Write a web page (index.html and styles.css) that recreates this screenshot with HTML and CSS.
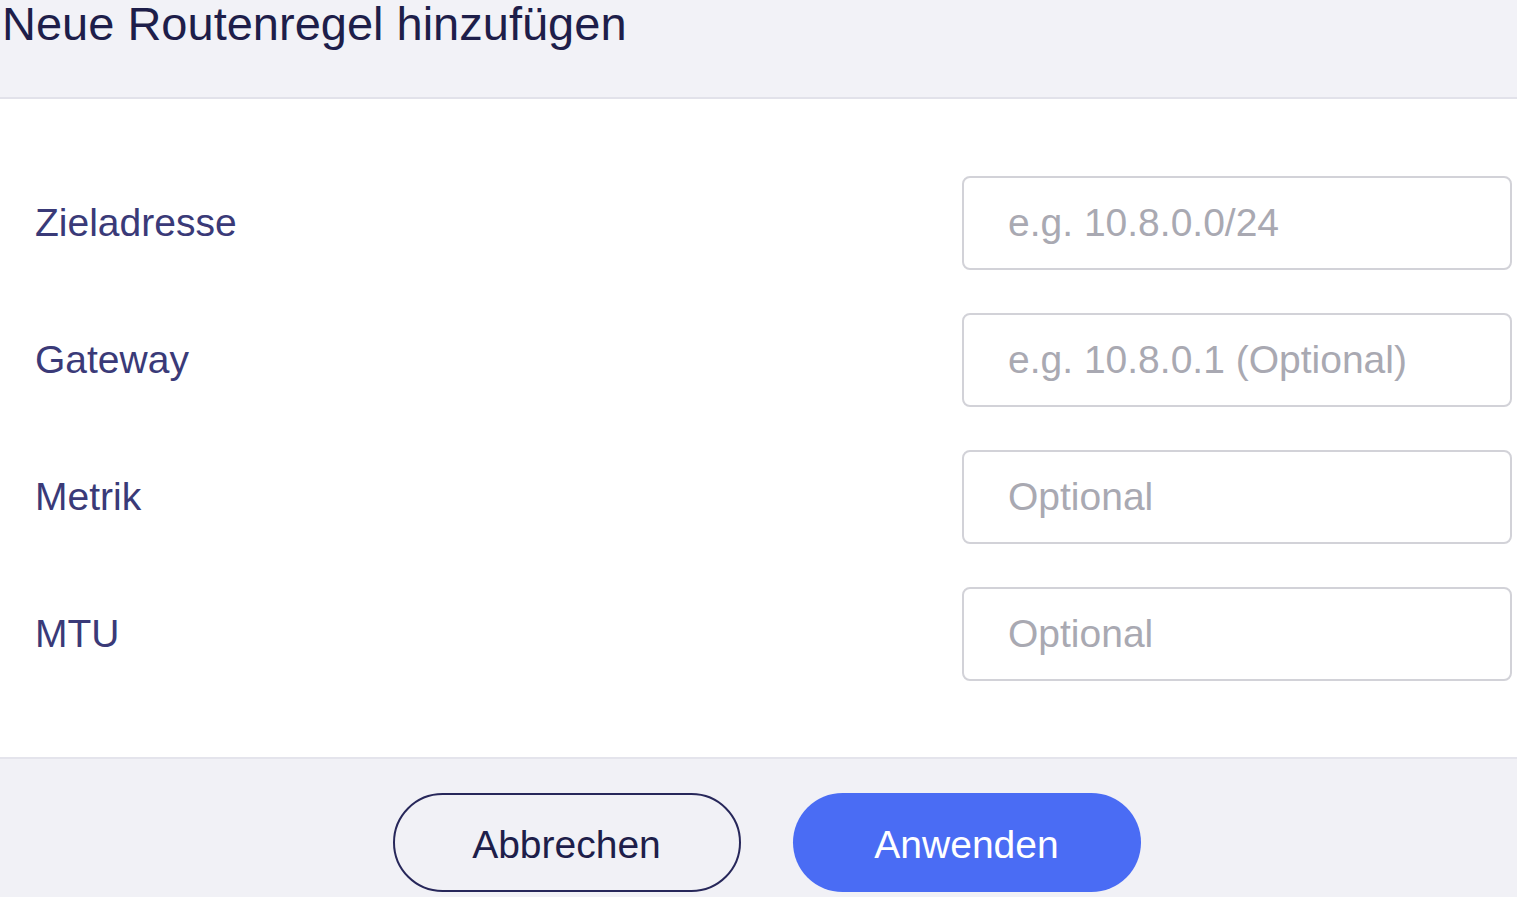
FILE: index.html
```html
<!DOCTYPE html>
<html lang="de">
<head>
<meta charset="utf-8">
<title>Neue Routenregel hinzufügen</title>
<link rel="stylesheet" href="styles.css">
</head>
<body>
<div class="dialog">
  <header class="head">
    <h1 class="title">Neue Routenregel hinzufügen</h1>
  </header>
  <main class="body">
    <div class="row">
      <label class="label" for="f1">Zieladresse</label>
      <input class="field" id="f1" type="text" placeholder="e.g. 10.8.0.0/24">
    </div>
    <div class="row">
      <label class="label" for="f2">Gateway</label>
      <input class="field" id="f2" type="text" placeholder="e.g. 10.8.0.1 (Optional)">
    </div>
    <div class="row">
      <label class="label" for="f3">Metrik</label>
      <input class="field" id="f3" type="text" placeholder="Optional">
    </div>
    <div class="row">
      <label class="label" for="f4">MTU</label>
      <input class="field" id="f4" type="text" placeholder="Optional">
    </div>
  </main>
  <footer class="foot">
    <button class="btn btn-cancel" type="button">Abbrechen</button>
    <button class="btn btn-apply" type="button">Anwenden</button>
  </footer>
</div>
</body>
</html>
```
FILE: styles.css
```css
html, body {
  margin: 0;
  padding: 0;
  height: 100%;
  overflow: hidden;
}
body {
  font-family: "Liberation Sans", Arial, sans-serif;
  background: #ffffff;
}
.dialog {
  display: flex;
  flex-direction: column;
  height: 897px;
}
.head {
  height: 97px;
  background: #f2f2f7;
  border-bottom: 2px solid #e2e2ea;
  box-sizing: content-box;
}
.title {
  margin: 0;
  padding-left: 2px;
  font-size: 47px;
  line-height: 48px;
  font-weight: 400;
  color: #1e1e4a;
}
.body {
  background: #ffffff;
  padding: 77px 5px 76px 35px;
  display: flex;
  flex-direction: column;
  gap: 43px;
}
.row {
  display: flex;
  align-items: center;
  justify-content: space-between;
}
.label {
  font-size: 39px;
  color: #3a3a78;
}
.field {
  width: 550px;
  height: 94px;
  box-sizing: border-box;
  border: 2px solid #d2d2d8;
  border-radius: 8px;
  padding: 0 0 0 44px;
  font-family: "Liberation Sans", Arial, sans-serif;
  font-size: 39px;
  color: #333;
  background: #fff;
  outline: none;
}
.field::placeholder {
  color: #a9a9b2;
}
.foot {
  flex: 1;
  background: #f1f1f6;
  border-top: 2px solid #e4e4ec;
  display: flex;
  justify-content: center;
  align-items: flex-start;
  gap: 52px;
  padding-top: 34px;
  padding-left: 16px;
}
.btn {
  width: 348px;
  height: 99px;
  border-radius: 50px;
  padding: 4px 0 0;
  font-family: "Liberation Sans", Arial, sans-serif;
  font-size: 39px;
  cursor: pointer;
}
.btn-cancel {
  background: transparent;
  border: 2px solid #27275a;
  color: #1e1e4a;
}
.btn-apply {
  background: #4a6cf4;
  border: none;
  color: #ffffff;
}
```
